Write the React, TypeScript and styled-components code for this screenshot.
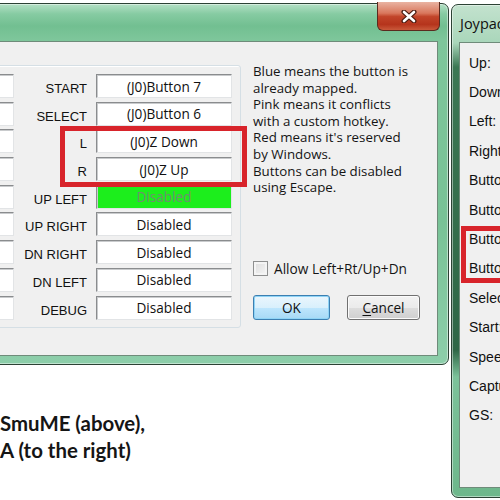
import React from "react"
import styled, { createGlobalStyle } from "styled-components"

const GlobalStyle = createGlobalStyle`
  body {
    margin: 0;
    background: #ffffff;
    overflow: hidden;
  }
`

const Desktop = styled.div`
  position: relative;
  width: 500px;
  height: 500px;
  overflow: hidden;
  background: #ffffff;
  padding-top: 410px;
  box-sizing: border-box;
`

const Caption = styled.div`
  font-family: Lato, "Open Sans", sans-serif;
  font-weight: 700;
  font-size: 20.4px;
  line-height: 27px;
  color: #151515;
`

const Window = styled.div<{ $left: number; $top: number; $w: number; $h: number; $pale?: boolean }>`
  position: absolute;
  left: ${(p) => p.$left}px;
  top: ${(p) => p.$top}px;
  width: ${(p) => p.$w}px;
  height: ${(p) => p.$h}px;
  box-sizing: border-box;
  border: 1px solid #2c4235;
  border-radius: 7px;
  display: flex;
  flex-direction: column;
  box-shadow: inset 0 0 0 1px rgba(255, 255, 255, 0.45);
  background: ${(p) =>
    p.$pale
      ? "linear-gradient(180deg, #c3e2ce 0px, #a9d6ba 38px, #3b7753 62px, #2f6646 345px, #7cc29a 372px, #6db78b 100%)"
      : "linear-gradient(180deg, #b4e0c5 0px, #86cba2 10px, #72bf91 22px, #7ec69b 36px, #78c296 60%, #8dceaa 100%)"};
`

const TitleBar = styled.div`
  height: 37px;
  flex: none;
  display: flex;
  align-items: center;
  font-family: "Open Sans", "Noto Sans", sans-serif;
  font-size: 14.5px;
  color: #101010;
  white-space: nowrap;
`

const CloseButton = styled.div`
  position: absolute;
  right: 8px;
  top: -2px;
  width: 63px;
  height: 29px;
  box-sizing: border-box;
  border: 1px solid #5b2a1f;
  border-top: none;
  border-radius: 0 0 6px 6px;
  background: linear-gradient(180deg, #e9b3a2 0%, #d9775c 40%, #c2452a 52%, #b5341c 80%, #c9593b 100%);
  display: flex;
  align-items: center;
  justify-content: center;
`

const Client = styled.div`
  flex: 1;
  box-sizing: border-box;
  border: 1px solid #6f8b7a;
  background: #f0f0f0;
  display: flex;
  overflow: hidden;
`

const GroupBox = styled.div`
  margin: 23px 0 0 8px;
  align-self: flex-start;
  border: 1px solid #d5dfe5;
  box-shadow: inset 1px 1px 0 #ffffff;
  border-radius: 3px;
  padding: 8px 8px 7px 0;
  display: grid;
  grid-template-columns: 23px 82px 136px;
  grid-auto-rows: 24px;
  row-gap: 3.7px;
`

const FieldLabel = styled.div`
  font-family: "Liberation Sans", Arial, sans-serif;
  font-size: 13px;
  color: #111;
  text-align: right;
  padding-right: 9px;
  padding-top: 7px;
  white-space: nowrap;
`

const EditBox = styled.div<{ $green?: boolean }>`
  box-sizing: border-box;
  border: 1px solid;
  border-color: #8a8c8e #e2e4e6 #e2e4e6 #8a8c8e;
  box-shadow: inset 1px 1px 0 #c9cbcd;
  background: ${(p) => (p.$green ? "#1cee1c" : "#ffffff")};
  color: ${(p) => (p.$green ? "#6f8f6f" : "#111111")};
  font-family: "Open Sans", "Noto Sans", sans-serif;
  font-size: 13.6px;
  display: flex;
  align-items: center;
  justify-content: center;
  white-space: nowrap;
`

const SidePanel = styled.div`
  margin: 21px 0 0 12px;
  width: 180px;
  display: flex;
  flex-direction: column;
  font-family: "Open Sans", "Noto Sans", sans-serif;
  font-size: 13.3px;
  color: #151515;
`

const HelpText = styled.p`
  margin: 0;
  line-height: 16.6px;
  white-space: nowrap;
`

const CheckRow = styled.label`
  margin-top: 63px;
  display: flex;
  align-items: center;
  gap: 6px;
  font-size: 13.7px;
  white-space: nowrap;
`

const CheckBox = styled.span`
  width: 15px;
  height: 15px;
  box-sizing: border-box;
  border: 1px solid #8e8f8f;
  background: linear-gradient(135deg, #dcdcdc, #f6f6f6);
  box-shadow: inset 0 0 0 2px #f4f4f4;
`

const ButtonRow = styled.div`
  margin-top: 17px;
  display: flex;
  gap: 17px;
`

const PushButton = styled.div<{ $default?: boolean; $w: number }>`
  width: ${(p) => p.$w}px;
  height: 25px;
  box-sizing: border-box;
  border-radius: 3px;
  border: 1px solid ${(p) => (p.$default ? "#3c7fb1" : "#707070")};
  box-shadow: inset 0 0 0 1px ${(p) => (p.$default ? "#8fd4f6" : "#fbfbfb")};
  background: ${(p) =>
    p.$default
      ? "linear-gradient(180deg, #eaf6fd 0%, #d9f0fc 50%, #bee6fd 51%, #a7d9f5 100%)"
      : "linear-gradient(180deg, #f2f2f2 0%, #ebebeb 50%, #dddddd 51%, #cfcfcf 100%)"};
  display: flex;
  align-items: center;
  justify-content: center;
  font-size: 13.6px;
  color: #111;

  u {
    text-decoration-thickness: 1px;
    text-underline-offset: 2px;
  }
`

const JoyList = styled.div`
  padding: 5px 0 0 9px;
  display: flex;
  flex-direction: column;
  font-family: "Liberation Sans", Arial, sans-serif;
  font-size: 14px;
  color: #111;
`

const JoyRow = styled.div`
  height: 29.4px;
  display: flex;
  align-items: center;
  white-space: nowrap;
`

const Highlight = styled.div<{ $left: number; $top: number; $w: number; $h: number }>`
  position: absolute;
  left: ${(p) => p.$left}px;
  top: ${(p) => p.$top}px;
  width: ${(p) => p.$w}px;
  height: ${(p) => p.$h}px;
  box-sizing: border-box;
  border: 5px solid #d8242b;
  pointer-events: none;
`

const rows = [
  { label: "START", value: "(J0)Button 7" },
  { label: "SELECT", value: "(J0)Button 6" },
  { label: "L", value: "(J0)Z Down" },
  { label: "R", value: "(J0)Z Up" },
  { label: "UP LEFT", value: "Disabled", green: true },
  { label: "UP RIGHT", value: "Disabled" },
  { label: "DN RIGHT", value: "Disabled" },
  { label: "DN LEFT", value: "Disabled" },
  { label: "DEBUG", value: "Disabled" },
]

const joyRows = [
  "Up:",
  "Down:",
  "Left:",
  "Right:",
  "Button A:",
  "Button B:",
  "Button L:",
  "Button R:",
  "Select:",
  "Start:",
  "Speed:",
  "Capture:",
  "GS:",
]

const CloseGlyph = () => (
  <svg width="16" height="13" viewBox="0 0 16 13">
    <path d="M3 2 L13 11 M13 2 L3 11" stroke="#4a1c12" strokeWidth="5" strokeLinecap="round" />
    <path d="M3 2 L13 11 M13 2 L3 11" stroke="#ffffff" strokeWidth="2.6" strokeLinecap="round" />
  </svg>
)

export default function App() {
  return (
    <>
      <GlobalStyle />
      <Desktop>
        <Window $left={451} $top={4} $w={80} $h={494} $pale>
          <TitleBar style={{ paddingLeft: 8 }}>Joypad Input</TitleBar>
          <Client style={{ marginLeft: 7, marginBottom: 9 }}>
            <JoyList>
              {joyRows.map((r, i) => (
                <JoyRow key={i}>{r}</JoyRow>
              ))}
            </JoyList>
          </Client>
        </Window>

        <Window $left={-30} $top={3} $w={479} $h={362}>
          <CloseButton>
            <CloseGlyph />
          </CloseButton>
          <TitleBar />
          <Client style={{ margin: "0 10px 8px 10px" }}>
            <GroupBox>
              {rows.map((r) => (
                <React.Fragment key={r.label}>
                  <EditBox />
                  <FieldLabel>{r.label}</FieldLabel>
                  <EditBox $green={r.green}>{r.value}</EditBox>
                </React.Fragment>
              ))}
            </GroupBox>
            <SidePanel>
              <HelpText>
                Blue means the button is
                <br />
                already mapped.
                <br />
                Pink means it conflicts
                <br />
                with a custom hotkey.
                <br />
                Red means it's reserved
                <br />
                by Windows.
                <br />
                Buttons can be disabled
                <br />
                using Escape.
              </HelpText>
              <CheckRow>
                <CheckBox />
                Allow Left+Rt/Up+Dn
              </CheckRow>
              <ButtonRow>
                <PushButton $default $w={77}>
                  OK
                </PushButton>
                <PushButton $w={73}>
                  <span>
                    <u>C</u>ancel
                  </span>
                </PushButton>
              </ButtonRow>
            </SidePanel>
          </Client>
        </Window>

        <Highlight $left={60} $top={126} $w={187} $h={61} />
        <Highlight $left={461} $top={226} $w={60} $h={57} />

        <Caption>
          SmuME (above),
          <br />A (to the right)
        </Caption>
      </Desktop>
    </>
  )
}
